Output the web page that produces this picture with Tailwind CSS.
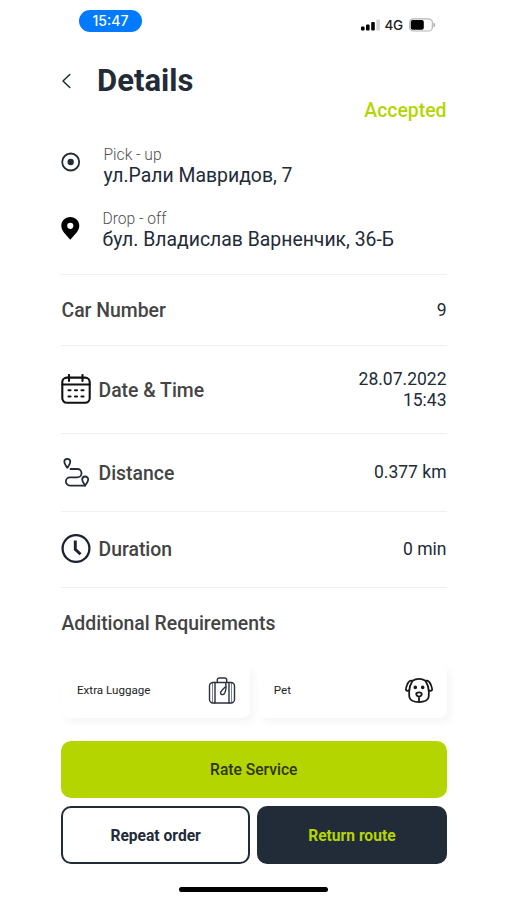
<!DOCTYPE html>
<html lang="en">
<head>
    <meta charset="utf-8">
    <meta name="viewport" content="width=device-width, initial-scale=1">
    <title>Details</title>
    <script src="https://cdn.jsdelivr.net/npm/@tailwindcss/browser@4"></script>
</head>
<body class="bg-white font-['Roboto','Liberation_Sans',sans-serif] text-[#222b38]">
    <div class="w-[507px] h-[900px] overflow-hidden flex flex-col pl-[61px] pr-[60.5px]">
        <!-- status bar -->
        <div class="h-11 shrink-0 flex items-start justify-between pl-[18px] pr-[11px] pt-[10px]">
            <div class="w-[63px] h-[22px] rounded-full bg-[#007aff] text-white font-['Inter',sans-serif] font-medium text-[14px] leading-[22px] text-center">15:47</div>
            <div class="flex items-center h-[29px]">
                <svg class="w-[19px] h-3" viewBox="0 0 19 12">
                    <rect x="0" y="7.5" width="3.6" height="4" rx="1"/>
                    <rect x="5" y="5.5" width="3.6" height="6" rx="1"/>
                    <rect x="10.2" y="3" width="3.6" height="8.5" rx="1"/>
                    <rect x="15.3" y="0.5" width="3.6" height="11" rx="1" fill="#d4d4d4"/>
                </svg>
                <span class="ml-[5px] w-[20px] pt-px font-['Inter',sans-serif] font-medium text-[13.5px] tracking-tight text-[#222]">4G</span>
                <svg class="ml-[4px] w-[27px] h-[14px]" viewBox="0 0 27 14" fill="none">
                    <rect x="0.7" y="0.8" width="22.6" height="12.2" rx="3.6" stroke="#b4b4b4" stroke-width="1.2"/>
                    <rect x="1.8" y="2.1" width="13" height="9.6" rx="2" fill="#000"/>
                    <path d="M24.5 4.6v4.8c1-.4 1.7-1.3 1.7-2.4s-.7-2-1.7-2.4z" fill="#aaa"/>
                </svg>
            </div>
        </div>

        <!-- title -->
        <div class="h-[54px] shrink-0 flex items-center pt-[19px]">
            <svg class="w-3 h-4" viewBox="0 0 12 16" fill="none" stroke="#222b38" stroke-width="1.5" stroke-linecap="round" stroke-linejoin="round"><path d="M8.8 1.5 2 8l6.800 6.500"/></svg>
            <h1 class="ml-[24px] text-[31px] leading-9 font-bold">Details</h1>
        </div>
        <div class="h-[26px] shrink-0 text-right text-[19.4px] leading-[26px] font-medium text-[#b5d500]">Accepted</div>

        <!-- route -->
        <div class="h-[151px] shrink-0 pt-[21px] border-b border-[#f0f0f0]">
            <div class="flex h-[64px]">
                <svg class="mt-[7px] w-5 h-5" viewBox="0 0 20 20" fill="none"><circle cx="9.7" cy="10" r="8.5" stroke="#222b38" stroke-width="1.8"/><circle cx="9.7" cy="10" r="3.2" fill="#222b38"/></svg>
                <div class="ml-[22.5px]">
                    <div class="text-[15.6px] leading-5 font-light text-[#505050]">Pick - up</div>
                    <div class="text-[19.4px] leading-[21px]">ул.Рали Мавридов, 7</div>
                </div>
            </div>
            <div class="flex">
                <svg class="mt-[7px] w-5 h-6" viewBox="0 0 20 24"><path fill-rule="evenodd" fill="#000" d="M9.3 1C4.3 1 .3 4.9.3 9.8c0 5.2 5 9.2 9 14 4-4.8 9-8.8 9-14C18.3 4.9 14.3 1 9.3 1zm0 5.700a3.100 3.100 0 1 1 0 6.200 3.100 3.100 0 0 1 0-6.200z"/></svg>
                <div class="ml-[21.5px]">
                    <div class="text-[15.6px] leading-5 font-light text-[#505050]">Drop - off</div>
                    <div class="text-[19.4px] leading-[21px]">бул. Владислав Варненчик, 36-Б</div>
                </div>
            </div>
        </div>

        <!-- order data -->
        <div class="h-[71px] shrink-0 flex items-center justify-between border-b border-[#f0f0f0]">
            <span class="pl-[0.5px] pt-[2px] text-[19.4px] font-medium text-[#444]">Car Number</span>
            <span class="text-[17.5px]">9</span>
        </div>
        <div class="h-[88px] shrink-0 flex items-center justify-between border-b border-[#f0f0f0]">
            <div class="flex items-center">
                <svg class="w-[30px] h-[30px] mr-[7.5px]" viewBox="0 0 30 30" fill="none" stroke="#111" stroke-width="2.1" stroke-linecap="round">
                    <rect x="1.3" y="3.6" width="27.4" height="25.2" rx="4.5"/>
                    <path d="M1.5 10.5h27M8 1v6M21.500 1v6"/>
                    <path d="M7.500 16.300h2M14 16.300h2M20.500 16.300h2M7.500 22.500h2M14 22.500h2M20.500 22.500h2"/>
                </svg>
                <span class="pt-[2px] text-[19.4px] font-medium text-[#444]">Date &amp; Time</span>
            </div>
            <div class="text-right text-[17.5px] leading-[21px]">28.07.2022<br>15:43</div>
        </div>
        <div class="h-[78px] shrink-0 flex items-center justify-between border-b border-[#f0f0f0]">
            <div class="flex items-center">
                <svg class="w-[30px] h-[30px] mr-[7.5px]" viewBox="0 0 30 30" fill="none" stroke="#222b38" stroke-width="1.8" stroke-linecap="round" stroke-linejoin="round">
                    <path d="M6.300 10.800C4.800 8.700 3.300 6.900 3.300 4.800a3 3 0 0 1 6 0c0 2.100-1.500 3.900-3 6zM24.200 28.500c-1.500-2.100-3-3.900-3-6a3 3 0 0 1 6 0c0 2.100-1.500 3.900-3 6z"/>
                    <path d="M9.500 12h6.800a4.200 4.200 0 0 1 0 8.400H9a4.100 4.100 0 0 0 0 8.200h15"/>
                </svg>
                <span class="pt-[2px] text-[19.4px] font-medium text-[#444]">Distance</span>
            </div>
            <span class="text-[17.5px]">0.377 km</span>
        </div>
        <div class="h-[76px] shrink-0 flex items-center justify-between border-b border-[#f0f0f0]">
            <div class="flex items-center">
                <svg class="w-[30px] h-[30px] mr-[7.5px]" viewBox="0 0 30 30" fill="none" stroke="#1b2232" stroke-width="2.3"><circle cx="15" cy="14.500" r="13.400"/><path d="M14.300 6.500v8.800l5.200 5" stroke-width="2.900"/></svg>
                <span class="pt-px text-[19.4px] font-medium text-[#444]">Duration</span>
            </div>
            <span class="text-[17.5px]">0 min</span>
        </div>

        <!-- requirements -->
        <h2 class="h-[76px] shrink-0 pl-[0.5px] pt-[23px] text-[19.4px] leading-[26px] font-medium text-[#444]">Additional Requirements</h2>
        <div class="h-[54px] shrink-0 grid grid-cols-2 gap-2 text-[11.6px] text-[#222]">
            <div class="flex items-center justify-between rounded-lg bg-white pl-4 pr-[14px] shadow-[4px_5px_8px_rgba(0,0,0,0.04)]">
                <span>Extra Luggage</span>
                <svg class="w-7 h-7" viewBox="0 0 28 28" fill="none" stroke="#2b3340" stroke-width="1.4" stroke-linecap="round" stroke-linejoin="round">
                    <rect x="1.5" y="5.5" width="25" height="20.5" rx="3.500"/>
                    <path d="M7 5.500V26M21 5.500V26M9.300 5.500V3a2 2 0 0 1 2-2h5.400a2 2 0 0 1 2 2v2.500"/>
                    <path d="M4.500 6V25.500M23.500 6V25.500" stroke-width=".6"/>
                    <path d="M17.800 6.500c.6 2.800.3 6-.7 8.700-.6 1.500-1.800 2.600-3 2.400-1.300-.2-1.900-1.500-1.300-2.700.7-1.400 2.400-3.200 4.700-5.200"/>
                </svg>
            </div>
            <div class="flex items-center justify-between rounded-lg bg-white pl-4 pr-[14px] shadow-[4px_5px_8px_rgba(0,0,0,0.04)]">
                <span>Pet</span>
                <svg class="w-7 h-7" viewBox="0 0 28 28" fill="none" stroke="#1a1a1a" stroke-width="1.800" stroke-linecap="round" stroke-linejoin="round">
                    <path d="M7.500 3.800C9.500 2.400 11.600 1.800 14 1.800s4.500.6 6.500 2c1.500 2.500 3.200 6 3.300 10.300 0 2.500.2 4.800-.3 6.500-1 3.200-4 4.500-9.500 4.500S5.500 23.800 4.500 20.600c-.5-1.700-.3-4-.3-6.500C4.300 9.800 6 6.300 7.500 3.800z"/>
                    <path d="M7.500 3.800C4.500 2.800 3.300 4.800 2.200 7.600 1.300 9.900.5 11.900 1 13c.7 1.300 2.500 1 3.300.2M20.500 3.800c3-1 4.200 1 5.300 3.800.9 2.300 1.700 4.300 1.200 5.400-.7 1.300-2.500 1-3.300.2"/>
                    <path d="M14 15.400c1.700 0 2.800.7 2.800 1.700S15.300 19.600 14 19.600s-2.800-1.500-2.800-2.500 1.100-1.700 2.800-1.700zM14 19.600v5"/>
                    <circle cx="10.300" cy="10.400" r=".9" fill="#1a1a1a"/>
                    <circle cx="17.700" cy="10.400" r=".9" fill="#1a1a1a"/>
                </svg>
            </div>
        </div>

        <!-- actions -->
        <button class="mt-[23px] h-[57px] shrink-0 rounded-[10px] bg-[#b5d500] pt-[3px] text-[15.6px] font-medium text-[#2d3516]">Rate Service</button>
        <div class="mt-2 h-[58px] shrink-0 grid grid-cols-2 gap-[7px] text-[15.6px] font-bold">
            <button class="rounded-[10px] border-2 border-[#222b38] pt-[3px]">Repeat order</button>
            <button class="rounded-[10px] bg-[#222b38] pt-[3px] text-[#b5d500]">Return route</button>
        </div>
        <div class="mt-[23px] w-[149px] h-[5px] shrink-0 self-center rounded-full bg-black"></div>
    </div>
</body>
</html>
